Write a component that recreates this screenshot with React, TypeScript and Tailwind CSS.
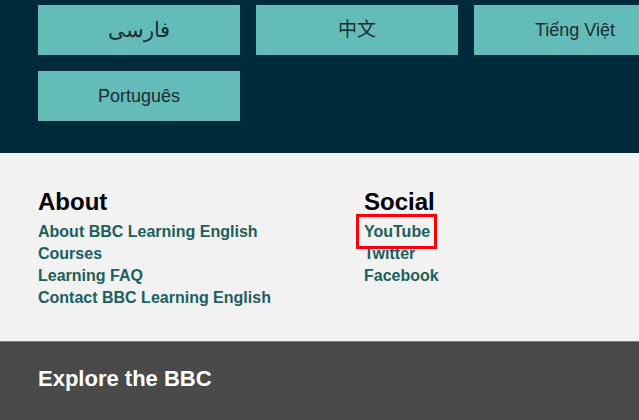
import React from "react";

const langs = [
  { t: "فارسی", c: "text-[21px]" },
  { t: "中文", c: "text-[19px]" },
  { t: "Tiếng Việt", c: "text-[18px]" },
  { t: "Português", c: "text-[18px]" },
];

export default function App() {
  const about = [
    "About BBC Learning English",
    "Courses",
    "Learning FAQ",
    "Contact BBC Learning English",
  ];
  return (
    <div
      className="w-[639px] h-[420px] overflow-hidden bg-[#4a4a4a]"
      style={{ fontFamily: '"Liberation Sans", Arial, "Noto Sans CJK SC", sans-serif' }}
    >
      <div className="h-[153px] bg-[#012a3d] pt-[5px] pl-[38px] overflow-hidden">
        <div className="grid grid-cols-[repeat(3,202px)] gap-4 w-[638px]">
          {langs.map((l) => (
            <div
              key={l.t}
              className={`h-[50px] bg-[#63bcb7] flex items-center justify-center text-[#1c2c33] ${l.c}`}
            >
              {l.t}
            </div>
          ))}
        </div>
      </div>
      <div className="h-[188px] bg-[#f2f2f2] pt-[35px] pl-[38px] flex">
        <div className="w-[326px]">
          <h2 className="text-[24px] leading-[28px] font-bold text-black mb-[5px]">About</h2>
          <ul>
            {about.map((a) => (
              <li key={a} className="text-[16px] leading-[22px] font-bold text-[#1b5f5e]">
                {a}
              </li>
            ))}
          </ul>
        </div>
        <div>
          <h2 className="text-[24px] leading-[28px] font-bold text-black mb-[5px]">Social</h2>
          <ul>
            <li className="relative text-[16px] leading-[22px] font-bold text-[#1b5f5e]">
              YouTube
              <span className="absolute left-[-8px] top-[-7px] w-[81px] h-[35px] border-[3px] border-[#ff0000]" />
            </li>
            <li className="text-[16px] leading-[22px] font-bold text-[#1b5f5e]">Twitter</li>
            <li className="text-[16px] leading-[22px] font-bold text-[#1b5f5e]">Facebook</li>
          </ul>
        </div>
      </div>
      <div className="h-[79px] bg-[#4a4a4a] border-t border-[#7d7d7d] pt-[24px] pl-[38px]">
        <h2 className="text-[22px] leading-[26px] font-bold text-white">Explore the BBC</h2>
      </div>
    </div>
  );
}
